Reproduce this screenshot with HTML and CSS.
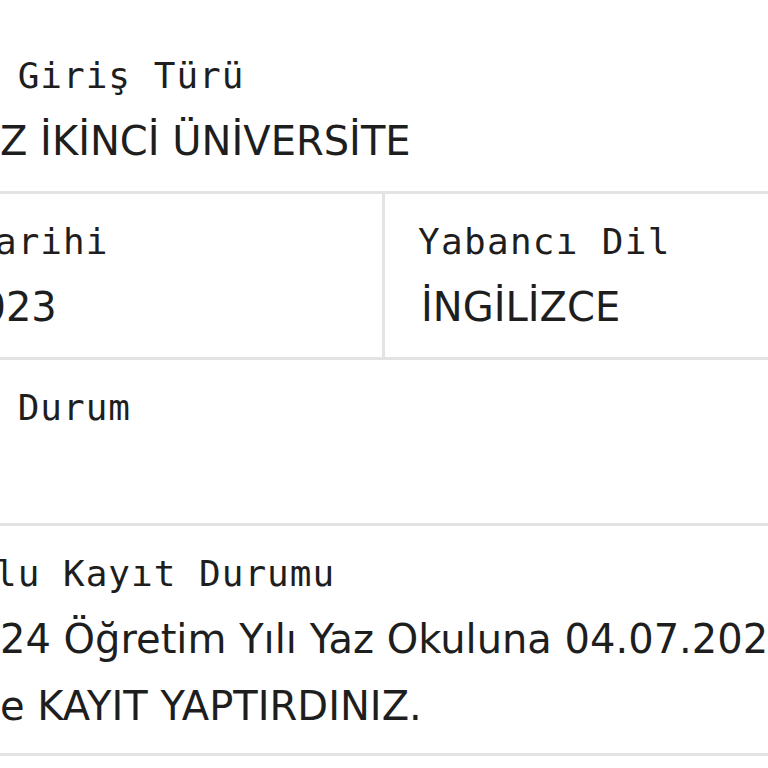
FILE: index.html
```html
<!DOCTYPE html>
<html lang="tr">
<head>
<meta charset="utf-8">
<title>Öğrenci Bilgileri</title>
<link rel="stylesheet" href="styles.css">
</head>
<body>
<div class="card">
  <div class="row">
    <div class="field">
      <div class="label"> Giriş Türü</div>
      <div class="value">Z İKİNCİ ÜNİVERSİTE</div>
    </div>
  </div>
  <div class="row row-split">
    <div class="field field-left">
      <div class="label">arihi</div>
      <div class="value value-cut">2023</div>
    </div>
    <div class="field field-right">
      <div class="label">Yabancı Dil</div>
      <div class="value">İNGİLİZCE</div>
    </div>
  </div>
  <div class="row">
    <div class="field">
      <div class="label"> Durum</div>
      <div class="value">&nbsp;</div>
    </div>
  </div>
  <div class="row">
    <div class="field">
      <div class="label">lu Kayıt Durumu</div>
      <div class="value">24 Öğretim Yılı Yaz Okuluna 04.07.2024<br>e KAYIT YAPTIRDINIZ.</div>
    </div>
  </div>
</div>
</body>
</html>
```

FILE: styles.css
```css
html, body {
  margin: 0;
  padding: 0;
  background: #ffffff;
  overflow: hidden;
}

body {
  width: 768px;
  height: 768px;
  padding-top: 28px;
  box-sizing: border-box;
}

.card {
  display: flex;
  flex-direction: column;
  width: 900px;
}

.row {
  border-bottom: 3px solid #e3e3e3;
}

.row-split {
  display: grid;
  grid-template-columns: 385px 1fr;
}

.field {
  padding: 24px 0 16px 0;
  overflow: hidden;
}

.row:last-child .field {
  padding-bottom: 13px;
}

.field-left {
  border-right: 3px solid #e3e3e3;
}

.field-right {
  padding-left: 33px;
}

.label {
  font-family: "DejaVu Sans Mono", monospace;
  font-size: 36px;
  letter-spacing: 1px;
  line-height: 48px;
  color: #1e1e1e;
  white-space: pre;
  margin-left: -5px;
}

.field-right .label {
  margin-left: 0;
  letter-spacing: 1.3px;
}

.value {
  font-family: "DejaVu Sans", sans-serif;
  font-size: 40px;
  line-height: 67px;
  color: #1e1e1e;
  white-space: nowrap;
  margin-top: 8px;
}

.field-right .value {
  margin-left: 3px;
}

.value-cut {
  margin-left: -45px;
}
```
